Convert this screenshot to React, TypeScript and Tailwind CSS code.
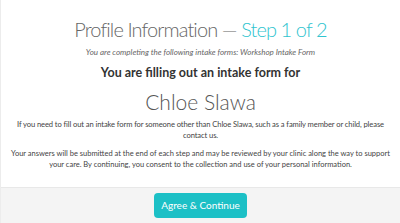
import React from "react";

export default function App() {
  return (
    <div className="w-[400px] h-[223px] overflow-hidden bg-white flex flex-col border-l border-[#ececec]" style={{ fontFamily: "Lato, 'Open Sans', sans-serif" }}>
      <div className="flex flex-col items-center pt-[17px] h-[187px]">
        <h1 className="text-[20px] leading-[24px] font-light text-[#666] tracking-[-0.9px]">
          Profile Information — <span className="text-[#2fc4cf]">Step 1 of 2</span>
        </h1>
        <p className="mt-[6px] text-[8px] leading-[10px] italic text-[#666]">
          You are completing the following intake forms: Workshop Intake Form
        </p>
        <p className="mt-[8px] text-[12.5px] leading-[16px] font-bold text-[#333]">
          You are filling out an intake form for
        </p>
        <p className="mt-[9px] text-[21px] leading-[24px] font-light text-[#555]">Chloe Slawa</p>
        <p className="mt-[5px] px-[10px] text-center text-[7.6px] leading-[11px] tracking-[-0.1px] text-[#444]">
          If you need to fill out an intake form for someone other than Chloe Slawa, such as a family member or child, please contact us.
        </p>
        <p className="mt-[7px] px-[8px] text-center text-[7.5px] leading-[11px] text-[#444]">
          Your answers will be submitted at the end of each step and may be reviewed by your clinic along the way to support your care. By continuing, you consent to the collection and use of your personal information.
        </p>
      </div>
      <div className="flex-1 bg-[#f4f4f4] border-t border-[#e8e8e8] flex justify-center pt-[5px]">
        <button className="w-[93px] h-[25px] rounded-[4px] bg-[#1cc0c6] text-white text-[10px]">
          Agree &amp; Continue
        </button>
      </div>
    </div>
  );
}
